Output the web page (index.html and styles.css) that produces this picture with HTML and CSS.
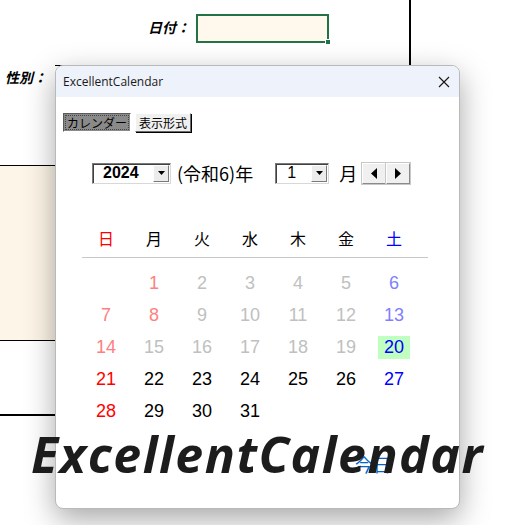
FILE: index.html
```html
<!DOCTYPE html>
<html lang="ja">
<head>
    <meta charset="UTF-8">
    <title>ExcellentCalendar</title>
    <link rel="stylesheet" href="styles.css">
</head>
<body>
    <div class="sheet">
        <div class="sheet-top">
            <span class="sheet-label">日付：</span>
            <div class="date-cell"><span class="fill-handle"></span></div>
        </div>
        <div class="sheet-row">
            <span class="sheet-label gender">性別：</span>
            <div class="rules">
                <span class="rule rule-a"></span>
                <span class="rule rule-b"></span>
            </div>
        </div>
        <div class="beige-block"></div>
        <div class="blank-block"></div>
        <div class="stub"></div>

        <div class="dialog">
            <div class="titlebar">
                <span class="title">ExcellentCalendar</span>
                <svg class="close" width="12" height="12" viewBox="0 0 12 12">
                    <path d="M1 1 L11 11 M11 1 L1 11" stroke="#1a1a1a" stroke-width="1.2" fill="none"/>
                </svg>
            </div>
            <div class="dialog-body">
                <div class="tabs">
                    <button class="tab active">カレンダー</button>
                    <button class="tab">表示形式</button>
                </div>

                <div class="nav">
                    <div class="combo year">
                        <span class="combo-value">2024</span>
                        <span class="combo-arrow">
                            <svg width="7" height="4" viewBox="0 0 7 4"><path d="M0 0 H7 L3.5 4 Z" fill="#000"/></svg>
                        </span>
                    </div>
                    <span class="nav-text era">(令和6)年</span>
                    <div class="combo month">
                        <span class="combo-value">1</span>
                        <span class="combo-arrow">
                            <svg width="7" height="4" viewBox="0 0 7 4"><path d="M0 0 H7 L3.5 4 Z" fill="#000"/></svg>
                        </span>
                    </div>
                    <span class="nav-text month-label">月</span>
                    <div class="spin">
                        <span class="spin-btn">
                            <svg width="6" height="11" viewBox="0 0 6 11"><path d="M6 0 V11 L0 5.5 Z" fill="#000"/></svg>
                        </span>
                        <span class="spin-btn">
                            <svg width="6" height="11" viewBox="0 0 6 11"><path d="M0 0 V11 L6 5.5 Z" fill="#000"/></svg>
                        </span>
                    </div>
                </div>

                <div class="week-head">
                    <span class="sun">日</span>
                    <span>月</span>
                    <span>火</span>
                    <span>水</span>
                    <span>木</span>
                    <span>金</span>
                    <span class="sat">土</span>
                </div>

                <div class="days">
                    <span></span>
                    <span class="past-holiday">1</span>
                    <span class="past">2</span>
                    <span class="past">3</span>
                    <span class="past">4</span>
                    <span class="past">5</span>
                    <span class="past-sat">6</span>

                    <span class="past-holiday">7</span>
                    <span class="past-holiday">8</span>
                    <span class="past">9</span>
                    <span class="past">10</span>
                    <span class="past">11</span>
                    <span class="past">12</span>
                    <span class="past-sat">13</span>

                    <span class="past-holiday">14</span>
                    <span class="past">15</span>
                    <span class="past">16</span>
                    <span class="past">17</span>
                    <span class="past">18</span>
                    <span class="past">19</span>
                    <span class="sat"><b class="today">20</b></span>

                    <span class="sun">21</span>
                    <span>22</span>
                    <span>23</span>
                    <span>24</span>
                    <span>25</span>
                    <span>26</span>
                    <span class="sat">27</span>

                    <span class="sun">28</span>
                    <span>29</span>
                    <span>30</span>
                    <span>31</span>
                </div>

                <div class="today-link">今日</div>
            </div>
        </div>

        <div class="watermark">ExcellentCalendar</div>
    </div>
</body>
</html>
```

FILE: styles.css
```css
* {
    margin: 0;
    padding: 0;
    box-sizing: border-box;
}

body {
    background: #fff;
    font-family: "Noto Sans CJK JP", "Noto Sans", sans-serif;
    overflow: hidden;
}

.sheet {
    position: relative;
    width: 527px;
    height: 525px;
    overflow: hidden;
}

/* excel sheet behind the dialog */
.sheet-top {
    display: flex;
    width: 411px;
    height: 65px;
    padding-left: 148px;
    border-right: 2px solid #000;
}

.sheet-label {
    font-size: 14px;
    font-weight: bold;
    font-style: italic;
    color: #000;
    line-height: 18px;
    margin-top: 18px;
}

.date-cell {
    position: relative;
    width: 133px;
    height: 29px;
    margin-top: 14px;
    margin-left: 6px;
    background: #fff8ec;
    border: 2px solid #217346;
}

.fill-handle {
    position: absolute;
    right: -4px;
    bottom: -4px;
    width: 6px;
    height: 6px;
    background: #217346;
    border: 1px solid #fff;
}

.sheet-row {
    display: flex;
    height: 100px;
}

.sheet-label.gender {
    width: 55px;
    padding-left: 5px;
    margin-top: 3px;
}

.rules {
    display: flex;
    gap: 70px;
    height: 1px;
}

.rule {
    border-top: 1px solid #000;
}

.rule-a { width: 73px; }
.rule-b { width: 58px; }

.beige-block {
    width: 60px;
    height: 176px;
    background: #fdf6e8;
    border-top: 1px solid #000;
    border-bottom: 1px solid #000;
}

.blank-block {
    width: 60px;
    height: 75px;
    border-bottom: 2px solid #000;
}

.stub {
    width: 25px;
    margin-left: 40px;
    margin-top: 21px;
    border-top: 3px solid #000;
}

/* dialog */
.dialog {
    position: absolute;
    left: 55px;
    top: 65px;
    width: 405px;
    height: 444px;
    background: #fff;
    border: 1px solid #b9b9b9;
    border-radius: 8px;
    overflow: hidden;
    box-shadow: 0 10px 30px rgba(0, 0, 0, 0.35);
}

.titlebar {
    display: flex;
    align-items: center;
    justify-content: space-between;
    height: 31px;
    padding: 0 9px 0 7px;
    background: #eef2fb;
}

.title {
    font-family: "Open Sans", "Noto Sans", sans-serif;
    font-size: 12px;
    color: #1a1a1a;
}

.dialog-body {
    padding: 16px 0 0 7px;
}

.tabs {
    display: flex;
    gap: 4px;
}

.tab {
    height: 19px;
    padding: 0 3px;
    font-family: "Noto Sans CJK JP", sans-serif;
    font-size: 12px;
    line-height: 15px;
    color: #000;
    background: #f0f0f0;
    border: 1px solid;
    border-color: #fff #6b6b6b #6b6b6b #fff;
    box-shadow: 1px 1px 0 #000;
}

.tab.active {
    background: #8a8a8a;
    border-color: #5a5a5a #fff #fff #5a5a5a;
    box-shadow: none;
    outline: 1px dotted #444;
    outline-offset: -3px;
}

.nav {
    display: flex;
    align-items: center;
    height: 22px;
    margin-top: 30px;
    margin-left: 29px;
}

.combo {
    display: flex;
    align-items: center;
    height: 21px;
    background: #fff;
    border: 1px solid;
    border-color: #7a7a7a #d8d8d8 #d8d8d8 #7a7a7a;
    box-shadow: inset 1px 1px 0 #404040;
}

.combo.year {
    width: 79px;
}

.combo.month {
    width: 54px;
    margin-left: 22px;
}

.combo-value {
    flex: 1;
    font-family: "Liberation Sans", sans-serif;
    font-size: 16px;
    font-weight: bold;
    color: #000;
    padding-left: 10px;
}

.combo.month .combo-value {
    padding-left: 11px;
    font-weight: normal;
}

.combo-arrow {
    display: flex;
    align-items: center;
    justify-content: center;
    width: 16px;
    height: 17px;
    margin-right: 1px;
    background: #ececec;
    border: 1px solid;
    border-color: #fff #7a7a7a #7a7a7a #fff;
}

.nav-text {
    font-size: 18px;
    color: #000;
}

.era {
    margin-left: 6px;
}

.month-label {
    margin-left: 10px;
}

.spin {
    display: flex;
    margin-left: 5px;
}

.spin-btn {
    display: flex;
    align-items: center;
    justify-content: center;
    width: 24px;
    height: 21px;
    background: #f0f0f0;
    border: 1px solid;
    border-color: #fff #8a8a8a #8a8a8a #fff;
    box-shadow: 0 0 0 1px #c8c8c8;
}

/* calendar */
.week-head {
    display: grid;
    grid-template-columns: repeat(7, 48px);
    width: 346px;
    height: 52px;
    margin-top: 22px;
    margin-left: 19px;
    padding-top: 21px;
    border-bottom: 1px solid #c8c8c8;
    font-size: 16px;
    line-height: 22px;
    text-align: center;
    color: #000;
}

.days {
    display: grid;
    grid-template-columns: repeat(7, 48px);
    grid-auto-rows: 32px;
    margin-top: 9px;
    margin-left: 19px;
    font-family: "Liberation Sans", sans-serif;
    font-size: 18px;
    line-height: 32px;
    text-align: center;
    color: #000;
}

.sun { color: #ff0000; }
.sat { color: #0000ff; }
.past { color: #c0c0c0; }
.past-holiday { color: #ff8080; }
.past-sat { color: #8080ff; }

.today {
    display: inline-block;
    width: 32px;
    height: 23px;
    line-height: 23px;
    font-weight: normal;
    background: #c0ffc0;
}

.today-link {
    margin-top: 24px;
    margin-left: 292px;
    font-size: 18px;
    color: #0066cc;
}

.watermark {
    position: absolute;
    left: 31px;
    top: 434px;
    font-family: "Open Sans", sans-serif;
    font-size: 50px;
    line-height: 40px;
    font-weight: bold;
    font-style: italic;
    letter-spacing: 1.5px;
    color: #1c1c1c;
}
```
